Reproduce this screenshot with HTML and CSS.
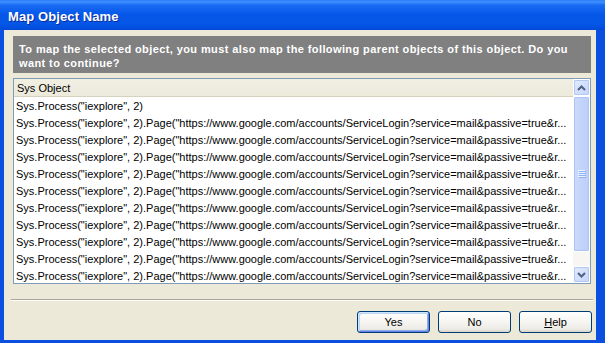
FILE: index.html
```html
<!DOCTYPE html>
<html>
<head>
<meta charset="utf-8">
<title>Map Object Name</title>
<link rel="stylesheet" href="styles.css">
</head>
<body>
<div class="window">
  <div class="titlebar"><span class="title">Map Object Name</span></div>
  <div class="client">
    <div class="message">To map the selected object, you must also map the following parent objects of this object. Do you<br>want to continue?</div>
    <div class="list">
      <div class="list-main">
        <div class="list-header">Sys Object</div>
        <div class="rows">
          <div class="row">Sys.Process("iexplore", 2)</div>
          <div class="row">Sys.Process("iexplore", 2).Page("https://www.google.com/accounts/ServiceLogin?service=mail&amp;passive=true&amp;r...</div>
          <div class="row">Sys.Process("iexplore", 2).Page("https://www.google.com/accounts/ServiceLogin?service=mail&amp;passive=true&amp;r...</div>
          <div class="row">Sys.Process("iexplore", 2).Page("https://www.google.com/accounts/ServiceLogin?service=mail&amp;passive=true&amp;r...</div>
          <div class="row">Sys.Process("iexplore", 2).Page("https://www.google.com/accounts/ServiceLogin?service=mail&amp;passive=true&amp;r...</div>
          <div class="row">Sys.Process("iexplore", 2).Page("https://www.google.com/accounts/ServiceLogin?service=mail&amp;passive=true&amp;r...</div>
          <div class="row">Sys.Process("iexplore", 2).Page("https://www.google.com/accounts/ServiceLogin?service=mail&amp;passive=true&amp;r...</div>
          <div class="row">Sys.Process("iexplore", 2).Page("https://www.google.com/accounts/ServiceLogin?service=mail&amp;passive=true&amp;r...</div>
          <div class="row">Sys.Process("iexplore", 2).Page("https://www.google.com/accounts/ServiceLogin?service=mail&amp;passive=true&amp;r...</div>
          <div class="row">Sys.Process("iexplore", 2).Page("https://www.google.com/accounts/ServiceLogin?service=mail&amp;passive=true&amp;r...</div>
          <div class="row">Sys.Process("iexplore", 2).Page("https://www.google.com/accounts/ServiceLogin?service=mail&amp;passive=true&amp;r...</div>
        </div>
      </div>
      <div class="scrollbar">
        <div class="sb-btn">
          <svg width="9" height="6" viewBox="0 0 9 6"><path d="M1 5 L4.5 1.5 L8 5" fill="none" stroke="#4D6185" stroke-width="2"/></svg>
        </div>
        <div class="sb-track">
          <div class="sb-thumb">
            <svg width="8" height="8" viewBox="0 0 8 8"><path d="M0 0.5h7M0 2.5h7M0 4.5h7M0 6.5h7" stroke="#EEF4FE" stroke-width="1"/><path d="M1 1.5h7M1 3.5h7M1 5.5h7M1 7.5h7" stroke="#8CB0F8" stroke-width="1"/></svg>
          </div>
        </div>
        <div class="sb-btn">
          <svg width="9" height="6" viewBox="0 0 9 6"><path d="M1 1 L4.5 4.5 L8 1" fill="none" stroke="#4D6185" stroke-width="2"/></svg>
        </div>
      </div>
    </div>
    <div class="separator"></div>
    <div class="buttons">
      <button class="btn btn-default">Yes</button>
      <button class="btn">No</button>
      <button class="btn"><u>H</u>elp</button>
    </div>
  </div>
</div>
</body>
</html>
```

FILE: styles.css
```css
* { box-sizing: border-box; }
html, body { margin: 0; padding: 0; }
body {
  width: 605px;
  height: 343px;
  overflow: hidden;
  font-family: "Liberation Sans", Arial, sans-serif;
  font-size: 11px;
}
.window {
  width: 605px;
  height: 343px;
  display: flex;
  flex-direction: column;
  background: #0A4FE0;
}
.titlebar {
  height: 30px;
  flex: none;
  display: flex;
  align-items: center;
  padding: 3px 0 0 8px;
  background: linear-gradient(#2C7BF6 0, #3E92FF 2px, #1A6BF2 5px, #0A5CEC 12px, #0657E8 50%, #0456E6 80%, #0350E0 92%, #0448D6 100%);
}
.title {
  color: #fff;
  font: bold 13px "Liberation Sans", Arial, sans-serif;
  letter-spacing: 0.1px;
  text-shadow: 1px 1px 0 #0A2A9A;
}
.client {
  flex: 1;
  margin: 0 9px 3px 4px;
  background: #ECE9D8;
  display: flex;
  flex-direction: column;
  padding: 6px 5px 7px 9px;
}
.message {
  height: 37px;
  flex: none;
  background: #808080;
  color: #fff;
  font-weight: bold;
  letter-spacing: 0.4px;
  line-height: 14px;
  padding: 6px 6px 0;
  white-space: nowrap;
  overflow: hidden;
}
.list {
  margin-top: 5px;
  height: 206px;
  flex: none;
  border: 1px solid #7F9DB9;
  background: #fff;
  display: flex;
  overflow: hidden;
}
.list-main {
  flex: 1;
  min-width: 0;
  display: flex;
  flex-direction: column;
}
.list-header {
  height: 18px;
  flex: none;
  background: linear-gradient(#F1EFE2, #EBEADB);
  border-bottom: 1px solid #D6D2C2;
  padding: 1px 3px 0;
  line-height: 16px;
  color: #000;
}
.rows { flex: 1; overflow: hidden; }
.row {
  height: 17px;
  line-height: 16px;
  padding: 1px 0 0 2px;
  white-space: nowrap;
  overflow: hidden;
  color: #000;
}
.scrollbar {
  width: 17px;
  flex: none;
  display: flex;
  flex-direction: column;
  background: #F7F6F2;
}
.sb-btn {
  height: 17px;
  flex: none;
  border: 1px solid #fff;
  border-radius: 2px;
  background: linear-gradient(135deg, #E3ECFE, #C4D4FA);
  box-shadow: inset 0 0 0 1px #B3C7F4;
  display: flex;
  align-items: center;
  justify-content: center;
}
.sb-track { flex: 1; display: flex; flex-direction: column; }
.sb-thumb {
  height: 156px;
  border: 1px solid #fff;
  border-radius: 2px;
  background: linear-gradient(to right, #CBDAFC, #BCCEF9);
  box-shadow: inset 0 0 0 1px #AFC4F3;
  display: flex;
  align-items: center;
  justify-content: center;
}
.separator {
  margin: 15px -2px 0;
  height: 2px;
  flex: none;
  border-top: 1px solid #ACA899;
  border-bottom: 1px solid #FFFFFF;
}
.buttons {
  margin: 10px -1px 0 0;
  display: flex;
  justify-content: flex-end;
  gap: 8px;
}
.btn {
  width: 73px;
  height: 22px;
  padding: 0;
  border: 1px solid #003C74;
  border-radius: 3px;
  background: linear-gradient(#FFFFFF, #F5F4F0 55%, #ECEBE5 85%, #D8D4C8 100%);
  font: 11px "Liberation Sans", Arial, sans-serif;
  color: #000;
}
.btn-default {
  box-shadow: inset 1px 1px 0 #CEE7FF, inset -1px -1px 0 #6982EE, inset 2px 2px 0 #BCD4F6, inset -2px -2px 0 #89ADE4;
}
```
